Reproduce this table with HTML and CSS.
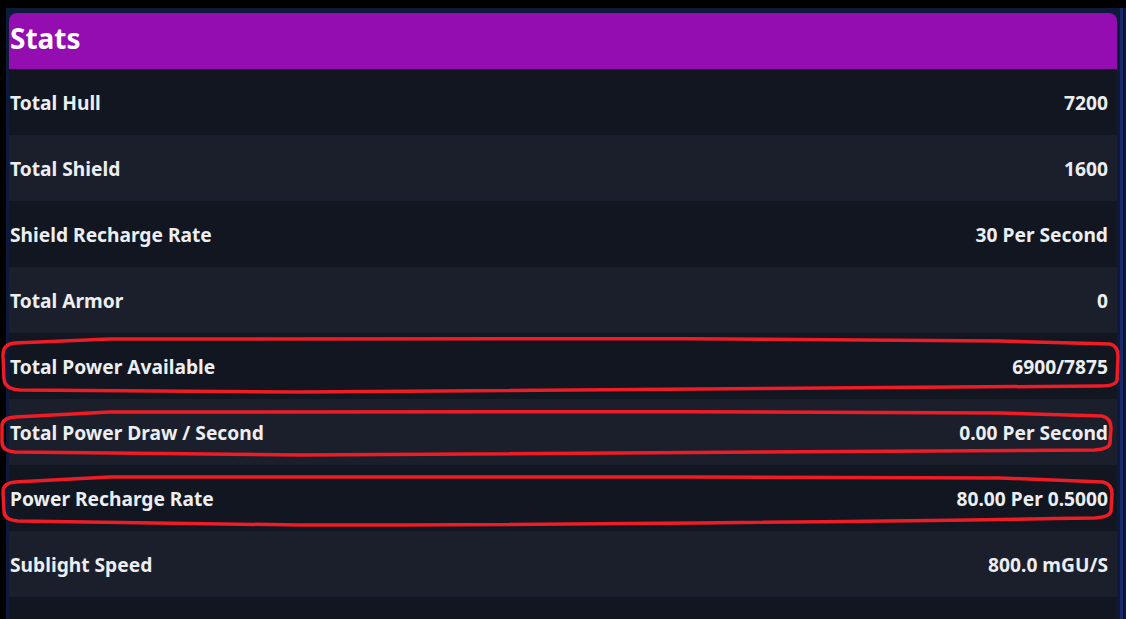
FILE: index.html
```html
<!DOCTYPE html>
<html>
<head>
<meta charset="utf-8">
<link rel="stylesheet" href="styles.css">
</head>
<body>
<div class="frame">
  <div class="panel">
    <div class="header">Stats</div>
    <div class="row"><span>Total Hull</span><span>7200</span></div>
    <div class="row"><span>Total Shield</span><span>1600</span></div>
    <div class="row"><span>Shield Recharge Rate</span><span>30 Per Second</span></div>
    <div class="row"><span>Total Armor</span><span>0</span></div>
    <div class="row"><span>Total Power Available</span><span>6900/7875</span></div>
    <div class="row"><span>Total Power Draw / Second</span><span>0.00 Per Second</span></div>
    <div class="row"><span>Power Recharge Rate</span><span>80.00 Per 0.5000</span></div>
    <div class="row"><span>Sublight Speed</span><span>800.0 mGU/S</span></div>
    <div class="row"><span></span><span></span></div>
  </div>
</div>
<svg class="marks" viewBox="0 0 1126 619" width="1126" height="619">
  <path d="M110 339 C300 337 700 338 1000 341 L1110 344 Q1118 346 1118 356 L1117 380 Q1116 386 1100 386 C900 388 600 392 300 392 L20 390 Q4 389 4 378 L3 355 Q3 344 15 343 Z"/>
  <path d="M110 412 C300 411 700 411 1000 413 L1102 416 Q1111 418 1111 428 L1110 443 Q1109 449 1095 450 C900 452 600 455 300 455 L15 452 Q2 451 2 442 L2 426 Q2 418 15 417 Z"/>
  <path d="M110 477 C300 476 700 477 1000 478 L1103 482 Q1112 484 1112 494 L1111 511 Q1110 517 1095 518 C900 521 600 525 300 525 L18 521 Q4 520 4 511 L3 492 Q3 483 15 482 Z"/>
</svg>
</body>
</html>
```
FILE: styles.css
```css
html, body {
  margin: 0;
  padding: 0;
  background: #000;
  width: 1126px;
  height: 619px;
  overflow: hidden;
  position: relative;
  font-family: "Noto Sans", "Open Sans", sans-serif;
  font-weight: 700;
  color: #eceef2;
}
.frame {
  margin: 8px 0 0 6px;
  height: 611px;
  padding: 5px 0 0 3px;
  box-sizing: border-box;
  overflow: hidden;
  background: linear-gradient(to right, #0e1a3b 0, #0e1a3b 1114px, #1a2a68 1114px, #1a2a68 1117px, #0c1633 1117px);
  width: 1120px;
}
.panel {
  width: 1108px;
  border-radius: 8px 8px 0 0;
  overflow: hidden;
}
.header {
  background: #940db0;
  height: 56px;
  padding-left: 1px;
  font-size: 28px;
  line-height: 50px;
  color: #fff;
}
.row {
  height: 66px;
  box-sizing: border-box;
  display: flex;
  justify-content: space-between;
  align-items: center;
  padding: 1px 9px 0 1px;
  font-size: 19.2px;
  background: #111621;
}
.row:nth-child(odd) {
  background: #1b1f2b;
}
.marks {
  position: absolute;
  left: 0;
  top: 0;
}
.marks path {
  fill: none;
  stroke: #ee1c25;
  stroke-width: 3.5;
}
```
